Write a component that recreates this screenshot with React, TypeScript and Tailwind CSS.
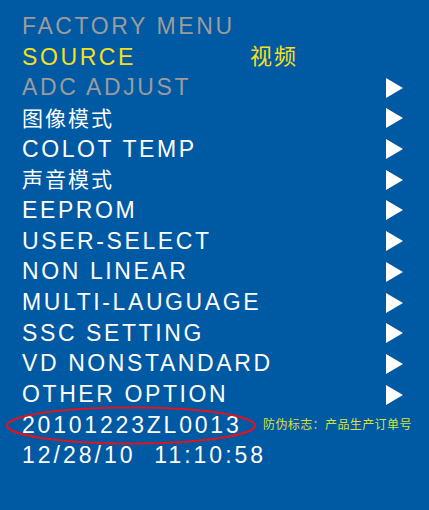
import React from "react";

type Row = { label: string; color?: "gray" | "yellow" | "white"; value?: string; arrow?: boolean; cjk?: boolean };

const rows: Row[] = [
  { label: "FACTORY MENU", color: "gray" },
  { label: "SOURCE", color: "yellow", value: "视频" },
  { label: "ADC ADJUST", color: "gray", arrow: true },
  { label: "图像模式", arrow: true, cjk: true },
  { label: "COLOT TEMP", arrow: true },
  { label: "声音模式", arrow: true, cjk: true },
  { label: "EEPROM", arrow: true },
  { label: "USER-SELECT", arrow: true },
  { label: "NON LINEAR", arrow: true },
  { label: "MULTI-LAUGUAGE", arrow: true },
  { label: "SSC SETTING", arrow: true },
  { label: "VD NONSTANDARD", arrow: true },
  { label: "OTHER OPTION", arrow: true },
];

function Arrow() {
  return (
    <svg width="17" height="20" viewBox="0 0 17 20" className="block">
      <polygon points="0,0 17,10 0,20" fill="#ffffff" />
    </svg>
  );
}

const colorClass = {
  gray: "text-[#9c9c9c]",
  yellow: "text-[#f4e01c]",
  white: "text-white",
};

export default function App() {
  return (
    <div
      className="w-[429px] h-[510px] bg-[#0059a3] pt-[11px] overflow-hidden"
      style={{ fontFamily: '"Liberation Sans", Arial, "Noto Sans CJK SC", sans-serif' }}
    >
      {rows.map((r) => (
        <div key={r.label} className="h-[30.7px] flex items-center pl-[22px] pr-[26px]">
          <span
            className={`w-[228px] whitespace-nowrap leading-none ${colorClass[r.color ?? "white"]} ${
              r.cjk ? "text-[21px] tracking-[2px]" : "text-[23px] tracking-[2.6px]"
            }`}
          >
            {r.label}
          </span>
          <span className="flex-1 text-[22px] tracking-[2px] leading-none text-[#f4e01c]">{r.value}</span>
          {r.arrow && <Arrow />}
        </div>
      ))}

      {/* serial no. with red ring */}
      <div className="relative h-[30.7px] flex items-center pl-[22px]">
        <svg className="absolute left-0 top-[-4px]" width="262" height="40" viewBox="0 0 262 40">
          <ellipse cx="131" cy="19.5" rx="124" ry="18" fill="none" stroke="#e0141e" strokeWidth="2.2" />
        </svg>
        <span className="w-[241px] text-[23px] tracking-[2.8px] leading-none text-white whitespace-nowrap">20101223ZL0013</span>
        <span className="text-[12px] tracking-[0.4px] leading-none text-[#d6e23a] whitespace-nowrap">防伪标志：产品生产订单号</span>
      </div>

      <div className="h-[30.7px] flex items-center pl-[22px]">
        <span className="text-[23px] tracking-[3px] leading-none text-white whitespace-pre">12/28/10  11:10:58</span>
      </div>
    </div>
  );
}
